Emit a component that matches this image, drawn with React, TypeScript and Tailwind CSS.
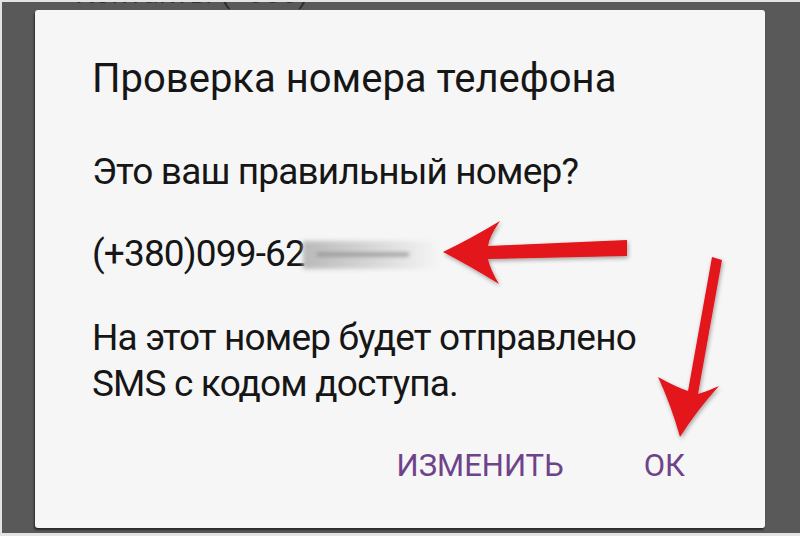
import React from "react";

const font = { fontFamily: "Roboto, 'Noto Sans', sans-serif" };

function Arrows() {
  return (
    <svg
      className="pointer-events-none absolute inset-0"
      width="800"
      height="536"
      viewBox="0 0 800 536"
    >
      <defs>
        <filter id="sh" x="-20%" y="-20%" width="140%" height="140%">
          <feDropShadow dx="1" dy="2" stdDeviation="2" floodColor="#000" floodOpacity="0.35" />
        </filter>
      </defs>
      {/* horizontal arrow pointing at the number */}
      <path
        d="M443,252 Q470,239 500,221 Q489,237 488,246 L627,240 L627,256 L488,259 Q490,269 499,284 Q470,266 443,252 Z"
        fill="#e3141c"
        filter="url(#sh)"
      />
      {/* arrow pointing down at OK */}
      <path
        d="M680,437 Q671,405 658,377 Q676,387 688,391 L712,257 L722,260 L698,394 Q708,391 719,386 Q697,410 680,437 Z"
        fill="#e3141c"
        filter="url(#sh)"
      />
    </svg>
  );
}

export default function App() {
  return (
    <div
      className="relative flex h-[536px] w-[800px] flex-col overflow-hidden bg-[#e4e4e4] pl-[2px] pt-[2px] pb-[3px]"
      style={font}
    >
      <div className="flex flex-1 flex-col bg-[#5a5959] pl-[33px] pr-[35px] pb-[5px]">
        {/* edge of the screen behind the dialog */}
        <div className="h-[8px] overflow-hidden pl-[40px]">
          <div className="mt-[-26px] text-[30px] leading-[34px] text-[#2f2f2f] blur-[0.6px]">
            Контакты (+380)
          </div>
        </div>

        <div className="flex flex-1 flex-col rounded-[3px] bg-[#f7f6f6] pl-[57px] pt-[46px] text-[#161616] shadow-[-1px_2px_2px_rgba(0,0,0,0.55)]">
          <div className="text-[40px] leading-[46px]">Проверка номера телефона</div>

          <div className="mt-[47px] text-[37px] leading-[46px] tracking-[-0.85px]">
            Это ваш правильный номер?
          </div>

          <div className="mt-[36px] flex items-center text-[37px] leading-[46px] tracking-[-0.85px]">
            <span>(+380)099-62</span>
            <span className="relative ml-[-2px] mt-[2px] h-[28px] w-[134px] bg-gradient-to-r from-[#b9b9b9] via-[#d6d6d6] to-[#f4f4f4] blur-[2px]">
              <span className="absolute left-[14px] top-[12px] h-[3px] w-[92px] bg-[#8a8a8a]" />
            </span>
          </div>

          <div className="mt-[38px] text-[37px] leading-[46px] tracking-[-0.85px]">
            На этот номер будет отправлено
            <br />
            SMS с кодом доступа.
          </div>

          <div className="mt-[39px] flex justify-end gap-[80px] pr-[80px] text-[31px] leading-[40px] text-[#6f438a]">
            <span>ИЗМЕНИТЬ</span>
            <span>ОК</span>
          </div>
        </div>
      </div>
      <Arrows />
    </div>
  );
}
